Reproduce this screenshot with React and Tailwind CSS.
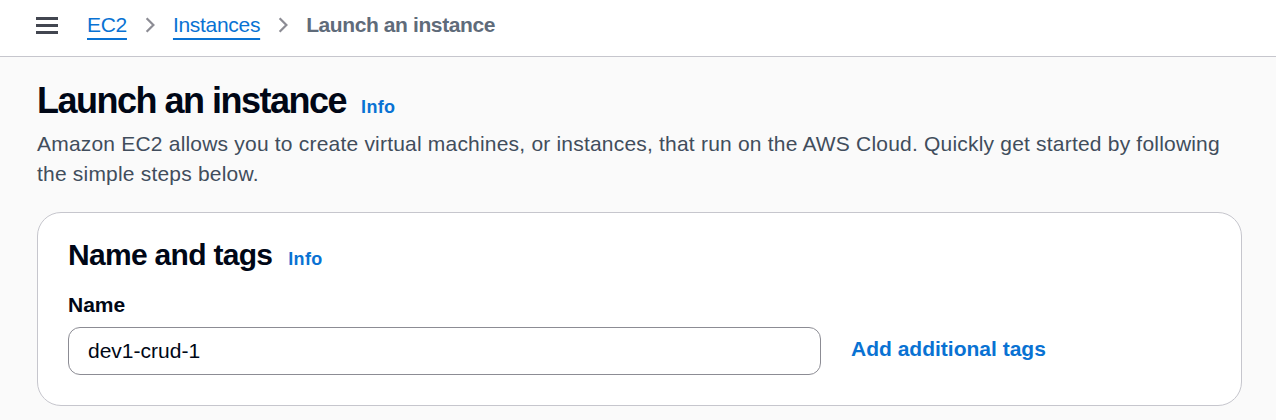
import React from 'react'

function Chevron() {
    return (
        <svg className="w-[18px] h-[18px] text-[#8c8c94] mx-[14px]" viewBox="0 0 16 16" fill="none" stroke="currentColor" strokeWidth={2}>
            <path d="M5 2l6 6-6 6" strokeLinejoin="miter" />
        </svg>
    )
}

export default function App() {
    return (
        <div className="min-h-[420px] bg-[#fafafa] font-['Liberation_Sans',Arial,sans-serif] text-[#000716]">
            {/* top bar with breadcrumbs */}
            <header className="h-[57px] bg-white border-b border-[#c6c6cd] flex items-center pl-[36px] pb-[7px]">
                <svg className="w-[22px] h-[22px] text-[#424650]" viewBox="0 0 22 22" fill="currentColor">
                    <rect x="0" y="3" width="22" height="3" />
                    <rect x="0" y="10" width="22" height="3" />
                    <rect x="0" y="17" width="22" height="3" />
                </svg>
                <nav className="flex items-center ml-[29px] text-[21px] leading-[30px] tracking-[-0.3px]">
                    <a className="text-[#0972d3] underline underline-offset-[6px] decoration-[2px]">EC2</a>
                    <Chevron />
                    <a className="text-[#0972d3] underline underline-offset-[6px] decoration-[2px]">Instances</a>
                    <Chevron />
                    <span className="text-[#5f6b7a] font-bold tracking-[-0.4px]">Launch an instance</span>
                </nav>
            </header>

            <main className="pl-[37px] pr-[34px] pt-[21px]">
                <div className="flex items-baseline gap-[15px]">
                    <h1 className="text-[36px] leading-[45px] font-bold tracking-[-1.5px]">Launch an instance</h1>
                    <a className="text-[18px] font-bold text-[#0972d3] tracking-[0.3px]">Info</a>
                </div>
                <p className="text-[21px] leading-[30px] text-[#414d5c] mt-[6px] tracking-[0.2px]">
                    Amazon EC2 allows you to create virtual machines, or instances, that run on the AWS Cloud. Quickly get started by following the simple steps below.
                </p>

                <section className="mt-[23px] bg-white border border-[#c6c6cd] rounded-[24px] px-[30px] pt-[24px] pb-[30px]">
                    <div className="flex items-baseline gap-[16px]">
                        <h2 className="text-[30px] leading-[36px] font-bold tracking-[-0.7px]">Name and tags</h2>
                        <a className="text-[18px] font-bold text-[#0972d3] tracking-[0.3px]">Info</a>
                    </div>
                    <label className="block mt-[17px] text-[21px] leading-[30px] font-bold">Name</label>
                    <div className="flex items-center mt-[7px]">
                        <input
                            className="w-[753px] h-[48px] border border-[#8c8c94] rounded-[12px] px-[19px] text-[21px] text-[#000716] outline-none bg-white"
                            defaultValue="dev1-crud-1"
                        />
                        <a className="ml-[30px] mb-[4px] text-[21px] font-bold text-[#0972d3]">Add additional tags</a>
                    </div>
                </section>
            </main>
        </div>
    )
}
